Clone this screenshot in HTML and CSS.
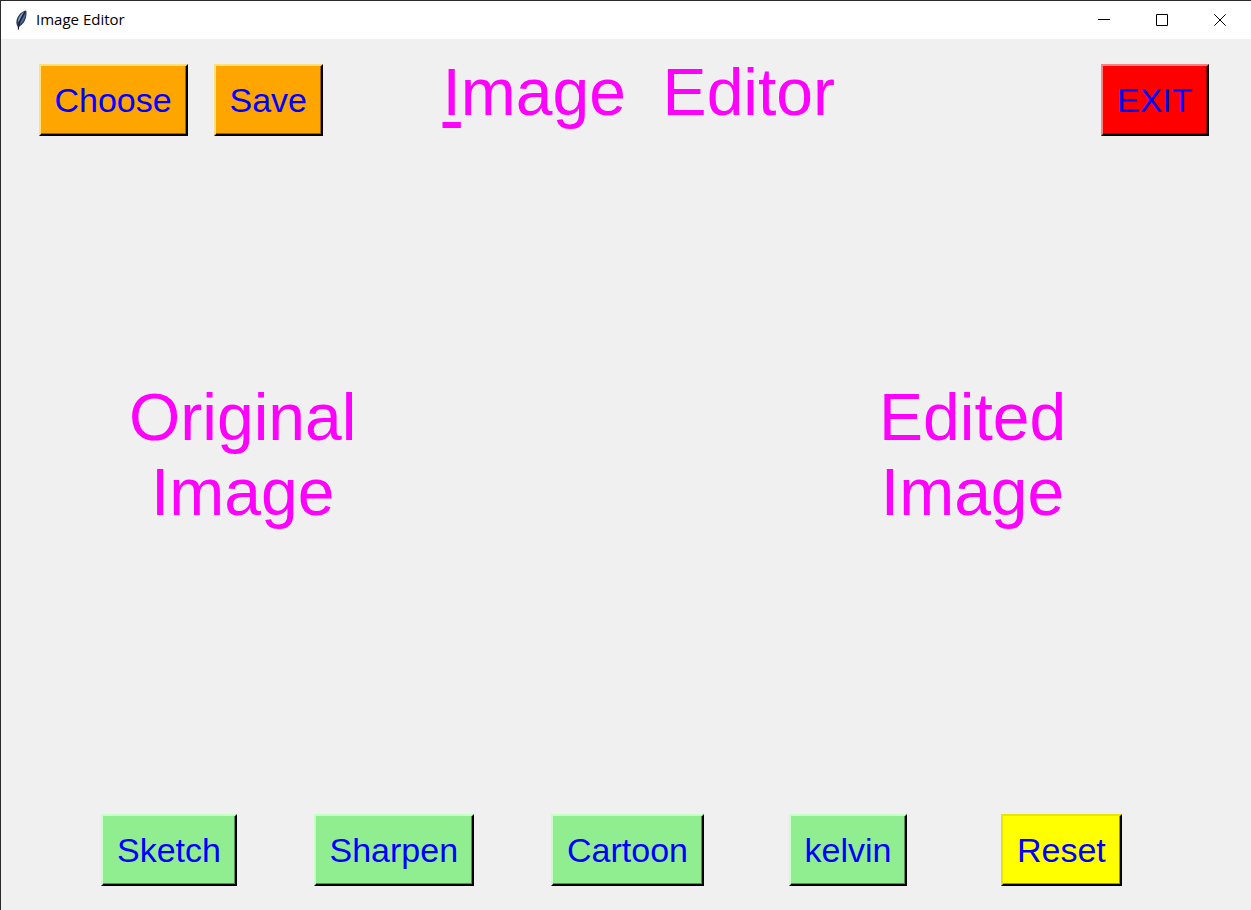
FILE: index.html
```html
<!DOCTYPE html>
<html lang="en">
<head>
<meta charset="utf-8">
<title>Image Editor</title>
<link rel="stylesheet" href="styles.css">
</head>
<body>
<div class="window">
  <header class="titlebar">
    <svg class="app-icon" viewBox="0 0 14 22" aria-hidden="true">
      <path d="M12.200 1.500C8 2 4 6 2.600 11c-.7 3 0 5 1 6.500l.6 3.500 1.200-3.500c3.500-2 5.600-5 6.600-9 .6-3 .8-5 .2-7z" fill="#2c3c55"/>
      <path d="M10 3C6.500 5 4 9 3.800 13.500c2-2.500 4-6 6.200-10.500z" fill="#7f9fcb"/>
      <path d="M11.600 4C9 9 7 12 5.400 16c3-2.500 5.500-6 6.200-12z" fill="#5278b0"/>
      <path d="M11 3C8 7 5 12 4.300 20.500" fill="none" stroke="#151a22" stroke-width="1"/>
    </svg>
    <span class="caption">Image Editor</span>
    <button class="win-btn" type="button" aria-label="Minimize"><svg viewBox="0 0 12 12"><path d="M0 5.500h12"/></svg></button>
    <button class="win-btn" type="button" aria-label="Maximize"><svg viewBox="0 0 12 12"><path d="M.5.5h11v11H.5z"/></svg></button>
    <button class="win-btn" type="button" aria-label="Close"><svg viewBox="0 0 12 12"><path d="M.3.3l11.400 11.400M11.700.3L.3 11.700"/></svg></button>
  </header>
  <main class="content">
    <div class="toolbar">
      <button class="btn orange choose" type="button">Choose</button>
      <button class="btn orange save" type="button">Save</button>
      <h1 class="heading"><span class="mnemonic">I</span>mage  Editor</h1>
      <button class="btn red exit" type="button">EXIT</button>
    </div>
    <div class="panels">
      <p class="panel-label original">Original<br>Image</p>
      <p class="panel-label edited">Edited<br>Image</p>
    </div>
    <div class="filters">
      <button class="btn green sketch" type="button">Sketch</button>
      <button class="btn green" type="button">Sharpen</button>
      <button class="btn green" type="button">Cartoon</button>
      <button class="btn green" type="button">kelvin</button>
      <button class="btn yellow" type="button">Reset</button>
    </div>
  </main>
</div>
</body>
</html>
```
FILE: styles.css
```css
* { box-sizing: border-box; }
body {
  margin: 0;
  font-family: "Liberation Sans", Arial, sans-serif;
}
.window {
  display: flex;
  flex-direction: column;
  min-height: 100vh;
  border-top: 1px solid #2b2b2e;
  border-left: 1px solid #2b2b2e;
  background: #f0f0f0;
}
.titlebar {
  display: flex;
  align-items: center;
  height: 38px;
  padding-left: 13px;
  padding-right: 2px;
  background: #fff;
}
.app-icon { width: 14px; height: 22px; }
.caption {
  flex: 1;
  padding-left: 8px;
  padding-bottom: 2px;
  font: 15px/20px "Open Sans", "Noto Sans", sans-serif;
  color: #000;
}
.win-btn {
  display: flex;
  align-items: center;
  justify-content: center;
  width: 58px;
  height: 38px;
  padding: 0;
  border: 0;
  background: transparent;
}
.win-btn svg {
  width: 12px;
  height: 12px;
  fill: none;
  stroke: #000;
  stroke-width: 1;
}
.content {
  flex: 1;
  display: flex;
  flex-direction: column;
}
.toolbar, .panels, .filters {
  display: grid;
  align-items: start;
  justify-items: start;
}
.toolbar {
  grid-template-columns: minmax(0, 3fr) minmax(0, 14fr) minmax(0, 18fr) minmax(0, 53fr) minmax(0, 12fr);
  padding-top: 16px;
}
.toolbar .btn { margin-top: 9px; }
.choose { grid-column: 2; }
.panels {
  flex: 1;
  grid-template-columns: minmax(0, 10fr) minmax(0, 60fr) minmax(0, 30fr);
  align-items: center;
  padding-bottom: 40px;
}
.original { grid-column: 2; }
.filters {
  grid-template-columns: minmax(0, 8fr) minmax(0, 17fr) minmax(0, 19fr) minmax(0, 19fr) minmax(0, 17fr) minmax(0, 20fr);
  padding-bottom: 24px;
}
.sketch { grid-column: 2; }
.heading, .panel-label {
  margin: 0;
  padding: 0 4px;
  font-size: 66px;
  font-weight: 400;
  line-height: 75px;
  color: #f0f;
  white-space: pre;
}
.panel-label {
  padding: 0 3px;
  text-align: center;
}
.mnemonic {
  text-decoration: underline;
  text-decoration-thickness: 6px;
  text-underline-offset: 7px;
  text-decoration-skip-ink: none;
}
.btn {
  height: 72px;
  padding: 0 14px;
  border: 2px solid;
  border-radius: 0;
  font: 34px "Liberation Sans", Arial, sans-serif;
  color: #00f;
  white-space: nowrap;
}
.orange {
  background: #ffa500;
  border-color: #ffe07a #000 #000 #ffe07a;
  box-shadow: inset -1px -1px #996300;
}
.red {
  background: #f00;
  border-color: #ff8080 #000 #000 #ff8080;
  box-shadow: inset -1px -1px #990000;
}
.green {
  background: #90ee90;
  border-color: #c8ffc8 #000 #000 #c8ffc8;
  box-shadow: inset -1px -1px #568f56;
}
.yellow {
  background: #ff0;
  border-color: #e6e600 #000 #000 #e6e600;
  box-shadow: inset -1px -1px #999900;
}
```
